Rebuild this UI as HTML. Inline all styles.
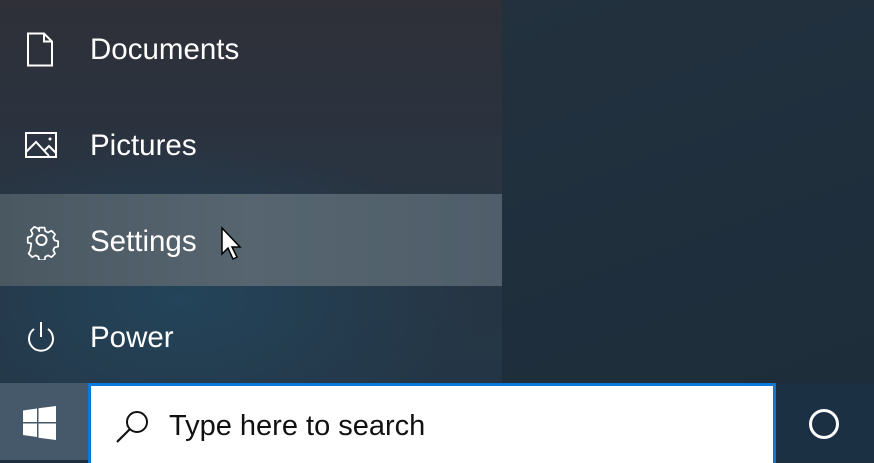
<!DOCTYPE html>
<html><head><style>
body{margin:0;width:874px;height:460px;overflow:hidden;position:relative;font-family:"Liberation Sans",sans-serif;background:#1f2f3d}
#panel{position:absolute;left:0;top:0;width:502px;height:383px;background:radial-gradient(ellipse 300px 160px at 180px 300px,#23445a 0%,rgba(35,68,90,0) 100%),linear-gradient(180deg,#2f3038 0%,#2a3340 40%,#243646 100%)}
#right{position:absolute;left:502px;top:0;width:372px;height:383px;background:linear-gradient(160deg,#23313f,#1d2d3a)}
.item{position:absolute;left:0;width:502px;height:92px;color:#fff;font-size:29.5px}
.item span{position:absolute;left:90px;top:31px}
.item svg{position:absolute;left:24px;top:30px}
#hl{background:linear-gradient(90deg,#4a5862,#56656f 50%,#4f5e6a)}
#tb{position:absolute;left:0;top:383px;width:874px;height:77px;background:#1c3044}
#start{position:absolute;left:0;top:383px;width:88px;height:77px;background:#45596a}
#search{position:absolute;left:88px;top:383px;width:682px;height:77px;border:3px solid #0a78d7;border-bottom:none;background:#fff}
#search span{position:absolute;left:78px;top:24px;font-size:29px;color:#111}
</style></head><body>
<div id="panel"></div><div id="right"></div>
<div class="item" style="top:2px"><svg width="34" height="36" viewBox="0 0 34 36"><path d="M4 1.5H20L28 9.5V33.5H4Z M20 1.5V9.5H28" fill="none" stroke="#fff" stroke-width="2"/></svg><span>Documents</span></div>
<div class="item" style="top:98px"><svg width="36" height="36" viewBox="0 0 36 36"><rect x="2" y="5" width="30" height="24" fill="none" stroke="#fff" stroke-width="2"/><path d="M2 24L12 14L25 28M20 23L25 18L32 25" fill="none" stroke="#fff" stroke-width="2"/><circle cx="26" cy="11" r="1.5" fill="#fff"/></svg><span>Pictures</span></div>
<div class="item" id="hl" style="top:194px"><svg width="36" height="36" viewBox="0 0 36 36" style="top:30px"><path d="M15 3h6l1 4 3 1.5 4-2 4 4-2 4 1.5 3 4 1v6l-4 1-1.5 3 2 4-4 4-4-2-3 1.5-1 4h-6l-1-4-3-1.5-4 2-4-4 2-4L6 21l-4-1v-6l4-1 1.5-3-2-4 4-4 4 2L15 7z" transform="translate(2,1) scale(0.88)" fill="none" stroke="#fff" stroke-width="2" stroke-linejoin="round"/><circle cx="17.5" cy="16" r="5" fill="none" stroke="#fff" stroke-width="2"/></svg><span>Settings</span>
<svg width="30" height="40" viewBox="0 0 30 40" style="left:220px;top:32px"><path d="M2 2V28L8 22L13 33L17 31L12 21H20Z" fill="#fff" stroke="#000" stroke-width="1.5"/></svg></div>
<div class="item" style="top:290px"><svg width="36" height="36" viewBox="0 0 36 36"><path d="M10 9A12 12 0 1 0 24 9" fill="none" stroke="#fff" stroke-width="2"/><path d="M17 2V17" stroke="#fff" stroke-width="2"/></svg><span>Power</span></div>
<div id="tb"></div><div id="start"><svg width="34" height="34" viewBox="0 0 34 34" style="position:absolute;left:23px;top:23px"><path d="M0 4.5L14 2.5V16H0Z M15.5 2.3L33 0V16H15.5Z M0 17.5H14V31L0 29Z M15.5 17.5H33V34L15.5 31.7Z" fill="#fff"/></svg></div>
<div id="search"><svg width="40" height="40" viewBox="0 0 40 40" style="position:absolute;left:22px;top:22px"><circle cx="24" cy="14" r="10" fill="none" stroke="#111" stroke-width="2"/><path d="M17 21L4 34" stroke="#111" stroke-width="2.2"/></svg><span>Type here to search</span></div>
<div style="position:absolute;border:3px solid #fff;border-radius:50%;box-sizing:border-box;width:30px;height:30px;left:809px;top:409px"></div>
</body></html>
